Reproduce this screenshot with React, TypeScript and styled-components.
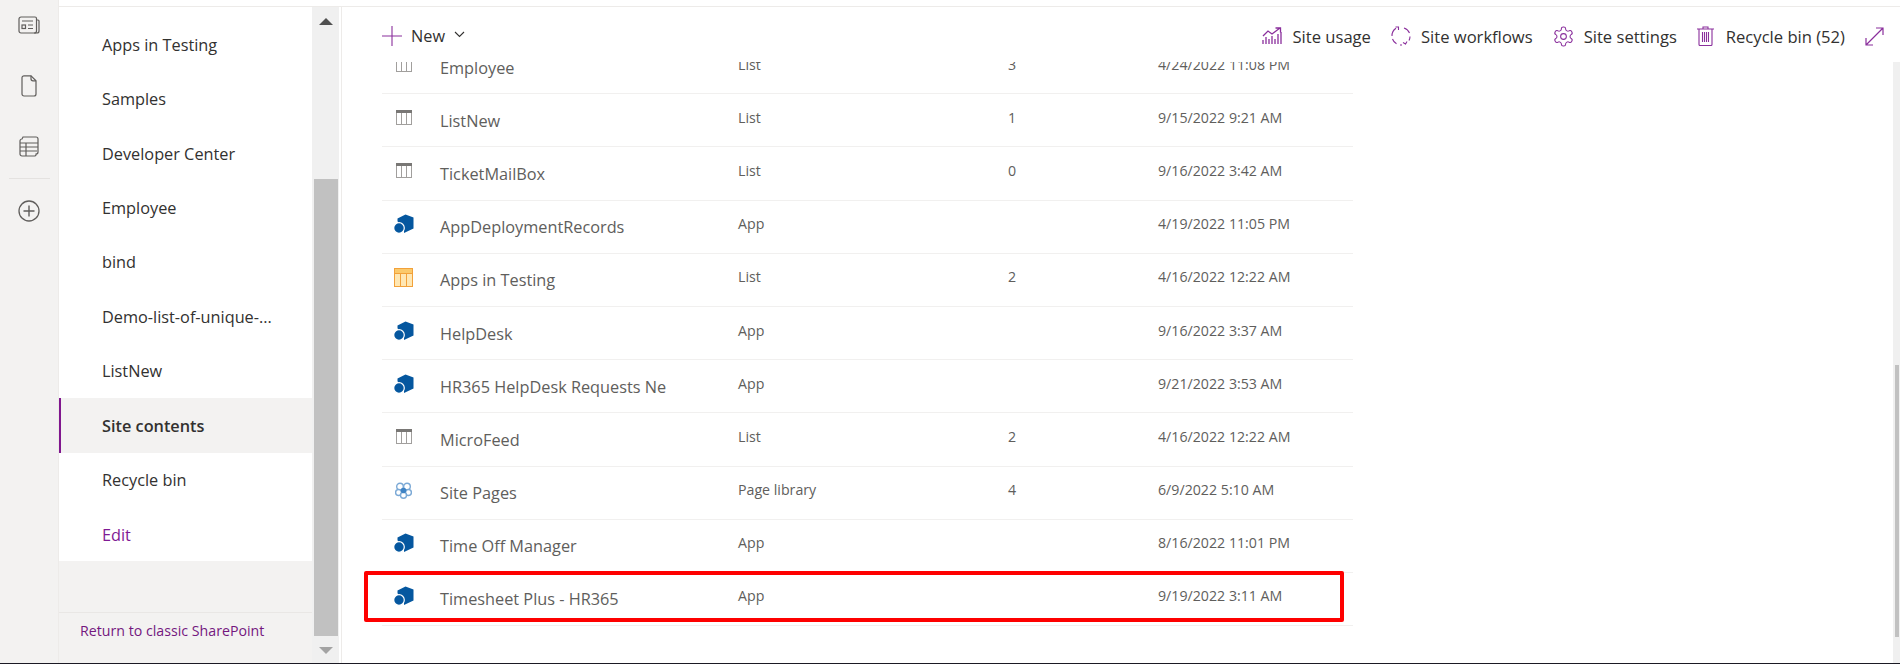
import React from 'react';
import styled, { createGlobalStyle } from 'styled-components';

const GlobalStyle = createGlobalStyle`
  html, body {
    margin: 0;
    padding: 0;
    background: #fff;
    font-family: "Open Sans", "Noto Sans", "Liberation Sans", sans-serif;
  }
`;

const Page = styled.div`
  display: flex;
  width: 1900px;
  height: 664px;
  box-sizing: border-box;
  border-bottom: 1px solid #1b1a24;
  overflow: hidden;
`;

const Rail = styled.div`
  display: flex;
  flex-direction: column;
  align-items: center;
  flex: 0 0 59px;
  box-sizing: border-box;
  padding-top: 13px;
  background: #f3f2f1;
  border-right: 1px solid #edebe9;
  color: #605e5c;
`;

const RailIcon = styled.div`
  display: flex;
  align-items: center;
  justify-content: center;
  height: 24px;
  margin-bottom: 36.5px;
  &:nth-child(3) {
    margin-bottom: 20px;
  }
`;

const RailDivider = styled.div`
  flex: 0 0 1px;
  width: 41px;
  margin-bottom: 20px;
  background: #e4e2e0;
`;

const Shell = styled.div`
  display: flex;
  flex-direction: column;
  flex: 1;
  min-width: 0;
`;

const TopStrip = styled.div`
  flex: 0 0 6px;
  border-bottom: 1px solid #edebe9;
`;

const Body = styled.div`
  display: flex;
  flex: 1;
  min-height: 0;
`;

const Nav = styled.nav`
  display: flex;
  flex-direction: column;
  flex: 0 0 253px;
  background: #f3f2f1;
`;

const NavList = styled.div`
  padding-top: 10px;
  background: #fff;
`;

const NavItem = styled.div<{ $selected?: boolean; $link?: boolean }>`
  display: flex;
  align-items: center;
  height: 54.45px;
  box-sizing: border-box;
  padding: 1px 0 0 ${p => (p.$selected ? '41px' : '43px')};
  font-size: 16.3px;
  font-weight: ${p => (p.$selected ? 600 : 400)};
  color: ${p => (p.$link ? '#7f1a94' : '#323130')};
  background: ${p => (p.$selected ? '#f3f2f1' : '#fff')};
  border-left: ${p => (p.$selected ? '2px solid #80178e' : 'none')};
`;

const NavFooter = styled.div`
  display: flex;
  align-items: center;
  margin-top: auto;
  height: 51px;
  box-sizing: border-box;
  padding: 0 0 16px 21px;
  border-top: 1px solid #e9e7e5;
  font-size: 14.2px;
  color: #74187f;
`;

const NavScrollbar = styled.div`
  position: relative;
  flex: 0 0 27px;
  background: #f0f0f0;
`;

const NavThumb = styled.div`
  position: absolute;
  top: 172px;
  left: 2px;
  right: 1px;
  height: 457px;
  background: #c1c1c1;
`;

const Arrow = styled.div<{ $down?: boolean }>`
  position: absolute;
  left: 7px;
  top: ${p => (p.$down ? '640px' : '11px')};
  width: 0;
  height: 0;
  border-left: 7px solid transparent;
  border-right: 7px solid transparent;
  border-${p => (p.$down ? 'top' : 'bottom')}: 7px solid ${p => (p.$down ? '#a3a3a3' : '#505050')};
`;

const Main = styled.main`
  display: flex;
  flex-direction: column;
  flex: 1;
  min-width: 0;
  margin-left: 2px;
  border-left: 1px solid #edebe9;
`;

const Toolbar = styled.div`
  display: flex;
  align-items: center;
  flex: 0 0 55px;
  box-sizing: border-box;
  padding: 3px 16px 0 40px;
  font-size: 16.3px;
  color: #323130;
`;

const NewButton = styled.div`
  display: flex;
  align-items: center;
  gap: 9px;
`;

const Commands = styled.div`
  display: flex;
  align-items: center;
  gap: 20px;
  margin-left: auto;
`;

const Command = styled.div`
  display: flex;
  align-items: center;
  gap: 10px;
  font-size: 16.6px;
  white-space: nowrap;
`;

const ListArea = styled.div`
  display: flex;
  flex: 1;
  min-height: 0;
`;

const Viewport = styled.div`
  flex: 1;
  min-width: 0;
  overflow: hidden;
`;

const List = styled.div`
  width: 971px;
  margin: -21px 0 0 40px;
`;

const Row = styled.div`
  position: relative;
  display: grid;
  grid-template-columns: 58px 298px 270px 150px 1fr;
  align-items: center;
  height: 53.2px;
  box-sizing: border-box;
  border-bottom: 1px solid #f1f0ef;
  color: #605e5c;
`;

const IconCell = styled.div`
  display: flex;
  align-items: center;
  justify-content: center;
  width: 43px;
  padding-bottom: 5px;
  box-sizing: border-box;
`;

const NameCell = styled.div`
  padding-top: 1px;
  font-size: 16.3px;
  white-space: nowrap;
`;

const MetaCell = styled.div`
  padding-bottom: 6px;
  font-size: 14.2px;
  white-space: nowrap;
`;

const Highlight = styled.div`
  position: absolute;
  left: -18px;
  top: -2px;
  width: 980px;
  height: 51px;
  box-sizing: border-box;
  border: 4px solid #fe0000;
  border-radius: 2px;
`;

const Scrollbar = styled.div`
  flex: 0 0 7px;
  background: #f0f0f0;
`;

const Thumb = styled.div`
  width: 4px;
  height: 272px;
  margin: 303px 0 0 2px;
  background: #c1c1c1;
`;

const purple = '#8a2f9c';

const NewsIcon = () => (
  <svg width="22" height="18" viewBox="0 0 22 18" fill="none" stroke="currentColor" strokeWidth="1.2">
    <path d="M3 1h14a1.5 1.5 0 0 1 1.5 1.5V15a2 2 0 0 1-2 2H3a2 2 0 0 1-2-2V3a2 2 0 0 1 2-2z" />
    <path d="M18.5 4H20a1 1 0 0 1 1 1v10a2 2 0 0 1-2 2h-3" />
    <path d="M4 5h11M10 9h5M10 12.500h5" />
    <rect x="4" y="9" width="3.500" height="3.500" />
  </svg>
);

const FileIcon = () => (
  <svg width="16" height="22" viewBox="0 0 16 22" fill="none" stroke="currentColor" strokeWidth="1.2">
    <path d="M3 .8h7l5 5V19a2 2 0 0 1-2 2H3a2 2 0 0 1-2-2V2.800a2 2 0 0 1 2-2z" />
    <path d="M10 .8v3a2 2 0 0 0 2 2h3" />
  </svg>
);

const TableStackIcon = () => (
  <svg width="20" height="21" viewBox="0 0 20 21" fill="none" stroke="currentColor" strokeWidth="1.2">
    <path d="M4 1h13a2 2 0 0 1 2 2v13a2 2 0 0 1-2 2v1a1.500 1.500 0 0 1-1.500 1H3a2 2 0 0 1-2-2V5a2 2 0 0 1 2-2l1-2z" />
    <path d="M1 7h18M1 11h18M1 15h17M7 7v13" />
  </svg>
);

const PlusCircleIcon = () => (
  <svg width="22" height="22" viewBox="0 0 22 22" fill="none" stroke="currentColor">
    <circle cx="11" cy="11" r="10" strokeWidth="1.300" />
    <path d="M11 5.500v11M5.500 11h11" strokeWidth="1.400" />
  </svg>
);

const PlusIcon = () => (
  <svg width="20" height="20" viewBox="0 0 20 20" fill="none" stroke={purple} strokeWidth="1.100">
    <path d="M10 0v20M0 10h20" />
  </svg>
);

const ChevronIcon = () => (
  <svg width="11" height="7" viewBox="0 0 11 7" fill="none" stroke="#323130" strokeWidth="1.100" style={{ marginBottom: 4 }}>
    <path d="M1 1l4.500 4.500L10 1" />
  </svg>
);

const UsageIcon = () => (
  <svg width="20" height="18" viewBox="0 0 20 18" fill="none" stroke={purple} strokeWidth="1.300">
    <path d="M1 17v-4M4 17v-7M7 17v-5M10 17V9M13 17v-5M16 17V7M19 17V5" />
    <path d="M1 9l5-5 4 3 8-6M13.500 1H18.500V5.500" />
  </svg>
);

const WorkflowIcon = () => (
  <svg width="20" height="20" viewBox="0 0 20 20" fill="none" stroke={purple} strokeWidth="1.100">
    <path d="M5 2.200A9 9 0 0 0 1 10" />
    <path d="M4.500 1h3v3M1.500 13a9 9 0 0 0 4 4.800M9 19h2M14 18a9 9 0 0 0 1-.6" />
    <path d="M13 2a9 9 0 0 1 5.500 5M19 10.500a9 9 0 0 1-1 4M12 16.500l2.500 1.500 1.500-2.500" />
  </svg>
);

const GearIcon = () => (
  <svg width="23" height="23" viewBox="0 0 24 24" fill="none" stroke={purple} strokeWidth="1.100" style={{ margin: '-1px -1px' }}>
    <path d="M12.220 2h-.44a2 2 0 0 0-2 2v.18a2 2 0 0 1-1 1.730l-.43.250a2 2 0 0 1-2 0l-.15-.080a2 2 0 0 0-2.730.730l-.220.380a2 2 0 0 0 .730 2.730l.150.100a2 2 0 0 1 1 1.720v.510a2 2 0 0 1-1 1.740l-.150.090a2 2 0 0 0-.730 2.730l.220.380a2 2 0 0 0 2.730.730l.150-.080a2 2 0 0 1 2 0l.430.250a2 2 0 0 1 1 1.730V20a2 2 0 0 0 2 2h.440a2 2 0 0 0 2-2v-.180a2 2 0 0 1 1-1.730l.430-.250a2 2 0 0 1 2 0l.150.080a2 2 0 0 0 2.730-.730l.220-.390a2 2 0 0 0-.730-2.730l-.150-.080a2 2 0 0 1-1-1.740v-.500a2 2 0 0 1 1-1.740l.150-.090a2 2 0 0 0 .730-2.730l-.220-.380a2 2 0 0 0-2.730-.730l-.150.080a2 2 0 0 1-2 0l-.430-.250a2 2 0 0 1-1-1.730V4a2 2 0 0 0-2-2z" />
    <circle cx="12" cy="12" r="3" />
  </svg>
);

const TrashIcon = () => (
  <svg width="17" height="20" viewBox="0 0 17 20" fill="none" stroke={purple} strokeWidth="1.100" style={{ marginRight: 2 }}>
    <path d="M0 3h17M6 3V1h5v2M2 3v15.500a1 1 0 0 0 1 1h11a1 1 0 0 0 1-1V3" />
    <path d="M5.500 6v10M7.500 6v10M9.500 6v10M11.500 6v10" />
  </svg>
);

const ExpandIcon = () => (
  <svg width="19" height="19" viewBox="0 0 19 19" fill="none" stroke={purple} strokeWidth="1.200">
    <path d="M1 18L18 1M11 1h7v7M1 11v7h7" />
  </svg>
);

const AppIcon = () => (
  <svg width="20" height="20" viewBox="0 0 20 20">
    <path d="M11.500 .5L19.500 3.500V14.500L10 19V11L3.500 7.500V4.500z" fill="#05579f" />
    <path d="M4 5.500L12 3V15H4z" fill="#05579f" />
    <circle cx="5" cy="14" r="5.300" fill="#05579f" stroke="#fff" strokeWidth="1.200" />
  </svg>
);

const ListIcon = () => (
  <svg width="16" height="15" viewBox="0 0 16 15">
    <rect x=".5" y=".5" width="15" height="14" fill="#fff" stroke="#a19f9d" />
    <rect width="16" height="3" fill="#797775" />
    <path d="M5.500 3v11M10.500 3v11" stroke="#a19f9d" />
  </svg>
);

const OrangeListIcon = () => (
  <svg width="19" height="19" viewBox="0 0 19 19">
    <rect x=".5" y=".5" width="18" height="18" fill="#ffe7b3" stroke="#f2a13a" />
    <rect x="1" y="1" width="17" height="4" fill="#fbc96b" />
    <path d="M1 5.500h17M6.500 5v13M12.500 5v13" stroke="#f2a13a" />
  </svg>
);

const PagesIcon = () => (
  <svg width="17" height="17" viewBox="0 0 17 17" fill="none">
    <g stroke="#7ba9d6" strokeWidth="1.400" fill="#fff">
      <circle cx="5" cy="4.500" r="3.300" />
      <circle cx="12" cy="4.500" r="3.300" />
      <circle cx="3.600" cy="10.500" r="3" />
      <circle cx="13.400" cy="10.500" r="3" />
      <circle cx="8.500" cy="13.300" r="3" />
    </g>
    <circle cx="8.500" cy="8.500" r="2.800" fill="#3f83c4" />
  </svg>
);

type Item = { icon: React.ReactNode; name: string; type: string; count: string; modified: string; marked?: boolean };

const items: Item[] = [
  { icon: <ListIcon />, name: 'Employee', type: 'List', count: '3', modified: '4/24/2022 11:08 PM' },
  { icon: <ListIcon />, name: 'ListNew', type: 'List', count: '1', modified: '9/15/2022 9:21 AM' },
  { icon: <ListIcon />, name: 'TicketMailBox', type: 'List', count: '0', modified: '9/16/2022 3:42 AM' },
  { icon: <AppIcon />, name: 'AppDeploymentRecords', type: 'App', count: '', modified: '4/19/2022 11:05 PM' },
  { icon: <OrangeListIcon />, name: 'Apps in Testing', type: 'List', count: '2', modified: '4/16/2022 12:22 AM' },
  { icon: <AppIcon />, name: 'HelpDesk', type: 'App', count: '', modified: '9/16/2022 3:37 AM' },
  { icon: <AppIcon />, name: 'HR365 HelpDesk Requests Ne', type: 'App', count: '', modified: '9/21/2022 3:53 AM' },
  { icon: <ListIcon />, name: 'MicroFeed', type: 'List', count: '2', modified: '4/16/2022 12:22 AM' },
  { icon: <PagesIcon />, name: 'Site Pages', type: 'Page library', count: '4', modified: '6/9/2022 5:10 AM' },
  { icon: <AppIcon />, name: 'Time Off Manager', type: 'App', count: '', modified: '8/16/2022 11:01 PM' },
  { icon: <AppIcon />, name: 'Timesheet Plus - HR365', type: 'App', count: '', modified: '9/19/2022 3:11 AM', marked: true },
];

const navLinks = ['Apps in Testing', 'Samples', 'Developer Center', 'Employee', 'bind', 'Demo-list-of-unique-...', 'ListNew'];

export default function App() {
  return (
    <Page>
      <GlobalStyle />
      <Rail>
        <RailIcon><NewsIcon /></RailIcon>
        <RailIcon><FileIcon /></RailIcon>
        <RailIcon><TableStackIcon /></RailIcon>
        <RailDivider />
        <RailIcon><PlusCircleIcon /></RailIcon>
      </Rail>
      <Shell>
        <TopStrip />
        <Body>
          <Nav>
            <NavList>
              {navLinks.map(label => (
                <NavItem key={label}>{label}</NavItem>
              ))}
              <NavItem $selected>Site contents</NavItem>
              <NavItem>Recycle bin</NavItem>
              <NavItem $link>Edit</NavItem>
            </NavList>
            <NavFooter>Return to classic SharePoint</NavFooter>
          </Nav>
          <NavScrollbar>
            <Arrow />
            <NavThumb />
            <Arrow $down />
          </NavScrollbar>
          <Main>
            <Toolbar>
              <NewButton>
                <PlusIcon />
                New
                <ChevronIcon />
              </NewButton>
              <Commands>
                <Command><UsageIcon />Site usage</Command>
                <Command><WorkflowIcon />Site workflows</Command>
                <Command><GearIcon />Site settings</Command>
                <Command><TrashIcon />Recycle bin (52)</Command>
                <Command><ExpandIcon /></Command>
              </Commands>
            </Toolbar>
            <ListArea>
              <Viewport>
                <List>
                  {items.map(item => (
                    <Row key={item.name}>
                      <IconCell>{item.icon}</IconCell>
                      <NameCell>{item.name}</NameCell>
                      <MetaCell>{item.type}</MetaCell>
                      <MetaCell>{item.count}</MetaCell>
                      <MetaCell>{item.modified}</MetaCell>
                      {item.marked && <Highlight />}
                    </Row>
                  ))}
                </List>
              </Viewport>
              <Scrollbar>
                <Thumb />
              </Scrollbar>
            </ListArea>
          </Main>
        </Body>
      </Shell>
    </Page>
  );
}
